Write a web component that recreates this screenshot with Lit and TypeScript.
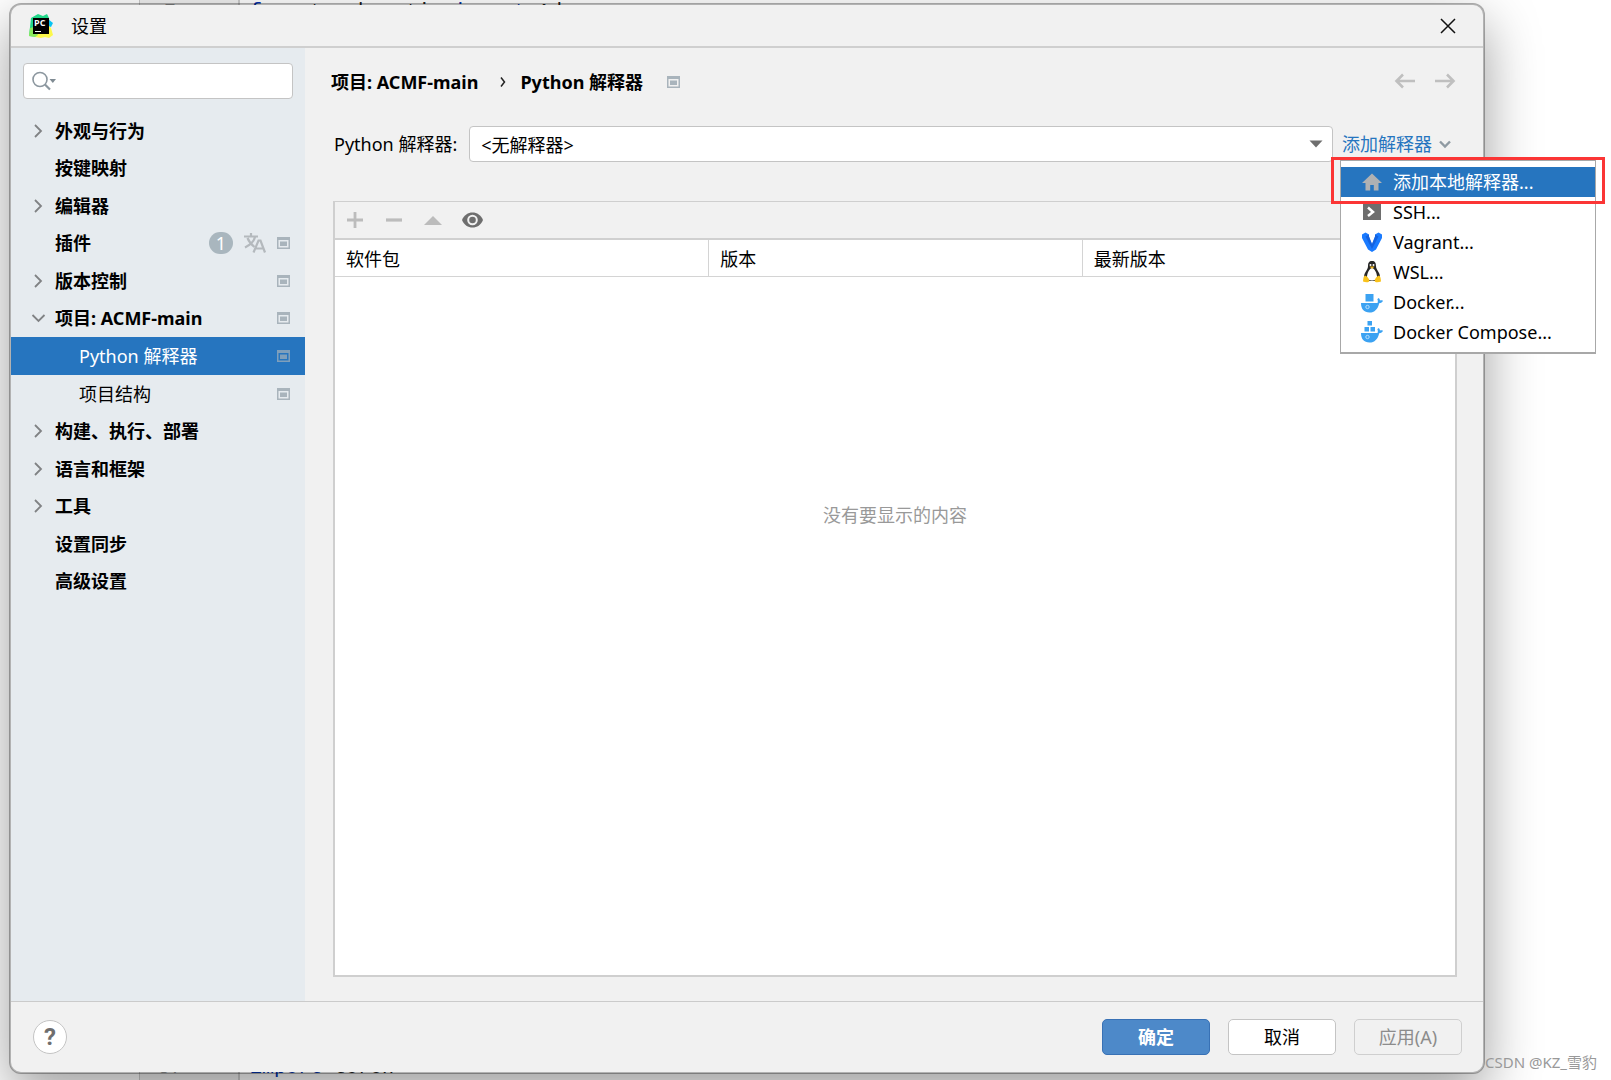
import { LitElement, html, css, svg, nothing } from "lit";
import { customElement, property, state } from "lit/decorators.js";
import { classMap } from "lit/directives/class-map.js";

type Row = { label: string; arrow?: "right" | "down"; child?: boolean; scope?: boolean; plugin?: boolean };

const ROWS: Row[] = [
  { label: "外观与行为", arrow: "right" },
  { label: "按键映射" },
  { label: "编辑器", arrow: "right" },
  { label: "插件", plugin: true, scope: true },
  { label: "版本控制", arrow: "right", scope: true },
  { label: "项目: ACMF-main", arrow: "down", scope: true },
  { label: "Python 解释器", child: true, scope: true },
  { label: "项目结构", child: true, scope: true },
  { label: "构建、执行、部署", arrow: "right" },
  { label: "语言和框架", arrow: "right" },
  { label: "工具", arrow: "right" },
  { label: "设置同步" },
  { label: "高级设置" },
];

const MENU = [
  { icon: "home", label: "添加本地解释器..." },
  { icon: "ssh", label: "SSH..." },
  { icon: "vagrant", label: "Vagrant..." },
  { icon: "linux", label: "WSL..." },
  { icon: "docker", label: "Docker..." },
  { icon: "compose", label: "Docker Compose..." },
];

const whale = svg`
  <path fill="#3ba2f2" d="M0 11h16.500c.6-1.200.4-2.800-.2-3.800l1.200-1.200c1 .7 1.400 1.500 1.500 2.400 1-.2 2-.1 3 .4-.6 1.500-1.900 2.300-3.800 2.400C17 17 13.500 20.500 8.500 20.500 3 20.500 0 17 0 11z"/>
  <circle cx="6.500" cy="15" r="1.700" fill="none" stroke="#b4dcfb" stroke-width="1"/>`;

const ICONS: Record<string, { w: number; h: number; body: unknown }> = {
  app: { w: 24, h: 24, body: svg`
    <path fill="#21d789" d="M2 4 9 0l5 2 4-2 2 4 1 16-13 3-8-1z"/>
    <path fill="#07c3f2" d="M19 5l5 4-2 4-3-1z"/>
    <path fill="#fcf84a" d="M20 12l2 2 2 7-4 3-4-1-4 1-6-1 2-4h11z"/>
    <path fill="#8bea5c" d="M1 14l4-1 4 8-3 2-6-1z"/>
    <path fill="#000" d="M4 4h16v16H4z"/>
    <path fill="#fff" d="M6 17h6v1H6z"/>
    <text x="5" y="12" font-size="9" font-weight="700" fill="#fff" font-family="Open Sans, sans-serif">PC</text>` },
  close: { w: 16, h: 16, body: svg`<path d="M1 1l14 14M15 1L1 15" stroke="#111" stroke-width="1.500" fill="none"/>` },
  search: { w: 24, h: 20, body: svg`
    <circle cx="8" cy="8.500" r="7" fill="none" stroke="#8c979f" stroke-width="1.600"/>
    <path d="M13 13.500l5 5" stroke="#8c979f" stroke-width="2.200"/><path fill="#7f8b93" d="M17.500 8H24l-3.200 4z"/>` },
  right: { w: 14, h: 14, body: svg`<path d="M4 1l6 6-6 6" stroke="#808284" stroke-width="1.800" fill="none"/>` },
  down: { w: 14, h: 14, body: svg`<path d="M1.500 4l6 6 6-6" stroke="#808284" stroke-width="1.800" fill="none"/>` },
  scope: { w: 13, h: 12, body: svg`
    <path class="scope-frame" fill-rule="evenodd" d="M0 0h13v12H0zM1.500 3v7.500h10V3z"/>
    <path class="scope-inner" d="M3 4.500h7V9H3z"/>` },
  translate: { w: 22, h: 20, body: svg`
    <g fill="none" stroke="#b4b9bd" stroke-width="2.200">
      <path d="M0 3.500h14M7 0v3.500M11 4c-1 4-5 8-10 10.500M3.500 5c1.500 4 4 6.500 7 9"/>
      <path d="M9.500 19.500L14.500 7.500h2L21 19.500M11.500 15.500H19"/>
    </g>` },
  back: { w: 20, h: 16, body: svg`<path d="M20 8H2M8 1.500L1.500 8 8 14.500" stroke="#bfbfbf" stroke-width="2.600" fill="none"/>` },
  forward: { w: 20, h: 16, body: svg`<path d="M0 8h18M12 1.500L18.500 8 12 14.500" stroke="#bfbfbf" stroke-width="2.600" fill="none"/>` },
  crumb: { w: 6, h: 10, body: svg`<path d="M1 .5L4.500 5 1 9.500" stroke="#222" stroke-width="1.500" fill="none"/>` },
  plus: { w: 16, h: 16, body: svg`<path d="M8 0v16M0 8h16" stroke="#bcbcbc" stroke-width="2.800"/>` },
  minus: { w: 16, h: 16, body: svg`<path d="M0 8h16" stroke="#bcbcbc" stroke-width="3.200"/>` },
  up: { w: 18, h: 16, body: svg`<path fill="#bcbcbc" d="M0 13L9 4l9 9z"/>` },
  eye: { w: 21, h: 16, body: svg`
    <path fill="#6e6e6e" d="M0 8C2 3 6 .5 10.500.5S19 3 21 8c-2 5-6 7.500-10.500 7.500S2 13 0 8z"/>
    <circle cx="10.500" cy="8" r="4.300" fill="none" stroke="#f1f1f1" stroke-width="2"/>` },
  caret: { w: 14, h: 8, body: svg`<path fill="#6e6e6e" d="M.5.500h13L7 7.500z"/>` },
  chevron: { w: 12, h: 8, body: svg`<path d="M1 1.500l5 5 5-5" stroke="#8f9aa2" stroke-width="2.400" fill="none"/>` },
  home: { w: 22, h: 20, body: svg`<path fill="#afb1b3" d="M11 1.500L1 11h3.500v7.500h4.700V13h3.600v5.500h4.700V11H21z"/>` },
  ssh: { w: 22, h: 20, body: svg`<path fill="#6e6e6e" d="M2 2h18v16H2z"/><path d="M7 5.500l5 4.500-5 4" fill="none" stroke="#fff" stroke-width="2.500"/>` },
  vagrant: { w: 22, h: 20, body: svg`
    <path fill="#1a7bff" d="M1 2.500L4.500.5 8 2.500v2l3 7.500L14 4.500v-2l3.500-2 3.500 2V6l-6 11.500-4 2.500-4-2.500L1 6z"/>
    <path fill="#1259d6" d="M14 4.500v-2l3.500 2L11 17v-5zM4.500 4.500L8 2.500v2l3 7.500v5z" opacity=".75"/>` },
  linux: { w: 22, h: 22, body: svg`
    <path fill="#262626" d="M11 0c3 0 4 2 4 5 0 4 4 6 4 11l-3 4H6l-3-4c0-5 4-7 4-11 0-3 1-5 4-5z"/>
    <path fill="#fff" d="M11 7c2.500 0 5 5.500 5 9 0 2.500-2.500 3.500-5 3.500S6 18.500 6 16c0-3.500 2.500-9 5-9z"/>
    <circle cx="9.500" cy="4" r="1" fill="#fff"/><circle cx="12.500" cy="4" r="1" fill="#fff"/>
    <path fill="#f3b81f" d="M8.500 5.500h5L11 8z"/>
    <path fill="#f9c21c" d="M4 14.500c2 .5 4 3 4.500 5C8 22 4.500 21.500 2 20.500c.3-3 .3-5 2-6zM18 14.500c-2 .5-4 3-4.500 5 .5 2.500 4 2 6.500 1-.3-3-.3-5-2-6z"/>` },
  docker: { w: 22, h: 20, body: svg`<path fill="#3ba2f2" d="M4.500 2h8v7.500h-8z"/>${whale}` },
  compose: { w: 22, h: 20, body: svg`<path fill="#3ba2f2" d="M6.500-1H11v4.500H6.500zM3.500 5h4.500v4.500H3.500zM9.500 5H14v4.500H9.500z"/>${whale}` },
};

const icon = (name: string) => {
  const i = ICONS[name];
  return html`<svg class="icon" width=${i.w} height=${i.h} viewBox="0 0 ${i.w} ${i.h}" aria-hidden="true">${i.body}</svg>`;
};

const base = css`
  * { box-sizing: border-box; }
  button, input, select {
    font: inherit;
    color: inherit;
    margin: 0;
    padding: 0;
    border: 0;
    background: none;
    outline: 0;
    text-align: left;
  }
  .icon { display: block; flex: none; overflow: visible; }
  .scope-frame, .scope-inner { fill: #a9b4bc; }
`;

@customElement("settings-tree")
export class SettingsTree extends LitElement {
  @property() selected = "";

  static styles = [base, css`
    :host { display: block; width: 294px; flex: none; background: #e6ebef; padding: 15px 0 0; }
    .search {
      display: flex; align-items: center; gap: 6px; height: 36px; margin: 0 12px 13px;
      padding: 0 8px; background: #fff; border: 1px solid #c4c4c4; border-radius: 4px;
    }
    .search input { flex: 1; min-width: 0; }
    .rows { display: grid; grid-auto-rows: 1fr; height: 488px; margin: 0; padding: 0; list-style: none; }
    .row {
      display: flex; align-items: center; width: 100%; height: 100%;
      padding: 0 15px 0 20px; font-weight: 700; white-space: nowrap;
    }
    .arrow { width: 24px; flex: none; }
    .label { flex: 1; }
    .child { padding-left: 68px; font-weight: 400; }
    .child .arrow { display: none; }
    .selected { background: #2675bf; color: #fff; }
    .selected .scope-frame, .selected .scope-inner { fill: #7f9fbb; }
    .badge {
      width: 24px; height: 22px; border-radius: 11px; background: #a9b6be; color: #fff;
      font-weight: 400; line-height: 22px; text-align: center;
    }
    .extras { display: flex; align-items: center; gap: 11px; }
  `];

  render() {
    return html`
      <label class="search">${icon("search")}<input type="text" aria-label="搜索" /></label>
      <ul class="rows">
        ${ROWS.map((r) => html`<li>
          <button class=${classMap({ row: true, child: !!r.child, selected: r.label === this.selected })}
            @click=${() => (this.selected = r.label)}>
            <span class="arrow">${r.arrow ? icon(r.arrow) : nothing}</span>
            <span class="label">${r.label}</span>
            <span class="extras">
              ${r.plugin ? html`<span class="badge">1</span>${icon("translate")}` : nothing}
              ${r.scope ? icon("scope") : nothing}
            </span>
          </button></li>`)}
      </ul>`;
  }
}

@customElement("interpreter-menu")
export class InterpreterMenu extends LitElement {
  static styles = [base, css`
    :host { position: absolute; top: 34px; left: -2px; width: 256px; z-index: 2; }
    .menu {
      margin: 0; padding: 6px 0 5px; list-style: none; background: #fff;
      border: 1px solid #a8a8a8; border-bottom-width: 2px;
    }
    .item {
      display: flex; align-items: center; gap: 10px; width: 100%; height: 30px;
      padding: 0 20px; color: #000; white-space: nowrap;
    }
    .active { background: #2675bf; color: #fff; }
    .mark {
      position: absolute; top: -3px; left: -9px; right: -9px; height: 47px;
      border: 3px solid #fb3535; pointer-events: none;
    }
  `];

  render() {
    return html`
      <ul class="menu">
        ${MENU.map((m, i) => html`<li><button class=${classMap({ item: true, active: i === 0 })}>
          ${icon(m.icon)}<span>${m.label}</span></button></li>`)}
      </ul>
      <div class="mark"></div>`;
  }
}

@customElement("interpreter-page")
export class InterpreterPage extends LitElement {
  @state() private open = true;

  static styles = [base, css`
    :host { display: flex; flex-direction: column; flex: 1; min-width: 0; padding: 0 26px 24px 28px; }
    .crumbs { display: flex; align-items: center; height: 68px; margin-left: -2px; font-weight: 700; white-space: nowrap; }
    .crumbs .sep { margin: 0 14px 0 22px; }
    .crumbs .scope { margin-left: 24px; }
    .nav { display: flex; gap: 20px; margin-left: auto; padding: 0 2px 2px 0; }
    .field { display: flex; align-items: center; height: 36px; margin: 10px 0 39px; white-space: nowrap; }
    .field label { margin: 0 12px 0 1px; }
    .combo { position: relative; flex: 1; display: flex; align-items: center; min-width: 0; }
    .combo select {
      appearance: none; width: 100%; height: 36px; padding: 2px 30px 0 11px;
      background: #fff; border: 1px solid #c4c4c4; border-radius: 4px;
    }
    .combo .caret { position: absolute; right: 10px; pointer-events: none; }
    .adder { position: relative; margin: 0 6px 0 9px; }
    .link { display: flex; align-items: center; gap: 7px; height: 36px; color: #2675bf; }
    .panel { flex: 1; display: flex; flex-direction: column; border: 2px solid #cfcfcf; border-top-width: 1px; background: #fff; }
    .tools { display: flex; align-items: center; gap: 21px; height: 38px; padding: 0 11px; background: #f1f1f1; border-bottom: 2px solid #d0d0d0; }
    .tools button { display: flex; justify-content: center; width: 18px; }
    table { width: 100%; table-layout: fixed; border-collapse: separate; border-spacing: 0; }
    th { height: 37px; padding: 2px 11px 0; font-weight: 400; text-align: left; border-bottom: 1px solid #d4d4d4; }
    th + th { border-left: 1px solid #d4d4d4; }
    .empty { padding-top: 226px; text-align: center; color: #999; }
  `];

  render() {
    return html`
      <div class="crumbs">
        <span>项目: ACMF-main</span><span class="sep">${icon("crumb")}</span><span>Python 解释器</span>
        <span class="scope">${icon("scope")}</span>
        <span class="nav">
          <button aria-label="后退">${icon("back")}</button>
          <button aria-label="前进">${icon("forward")}</button>
        </span>
      </div>
      <div class="field">
        <label for="interp">Python 解释器:</label>
        <span class="combo">
          <select id="interp"><option>&lt;无解释器&gt;</option></select>
          <span class="caret">${icon("caret")}</span>
        </span>
        <div class="adder">
          <button class="link" aria-expanded=${this.open} @click=${() => (this.open = !this.open)}>
            添加解释器 ${icon("chevron")}
          </button>
          ${this.open ? html`<interpreter-menu></interpreter-menu>` : nothing}
        </div>
      </div>
      <section class="panel">
        <div class="tools">
          <button aria-label="添加">${icon("plus")}</button>
          <button aria-label="移除">${icon("minus")}</button>
          <button aria-label="升级">${icon("up")}</button>
          <button aria-label="显示">${icon("eye")}</button>
        </div>
        <table><thead><tr><th>软件包</th><th>版本</th><th>最新版本</th></tr></thead></table>
        <div class="empty">没有要显示的内容</div>
      </section>`;
  }
}

@customElement("app-root")
export class AppRoot extends LitElement {
  static styles = [base, css`
    :host {
      display: block; position: relative; height: 100vh; overflow: hidden; background: #fff; color: #000;
      font: 18px/24px "Noto Sans", "Noto Sans CJK SC", sans-serif;
    }
    .editor {
      position: absolute; inset: 0; display: grid; grid-template-columns: 139px 101px 1fr;
      font: 20px/24px "Liberation Mono", monospace; color: #222;
    }
    .gutter { background: #f0f0f0; border: 1px solid #ccc; border-width: 0 2px 0 1px; }
    .gutter, .code { display: flex; flex-direction: column; justify-content: space-between; overflow: hidden; }
    .gutter { align-items: center; color: #999; padding-right: 38px; }
    .code { padding-left: 10px; white-space: pre; }
    .kw { color: #0033b3; }
    .stage { position: relative; display: flex; height: 100%; padding: 3px 126px 6px 9px; }
    .dialog {
      flex: 1; min-width: 0; display: flex; flex-direction: column;
      border: 2px solid rgba(0, 0, 0, 0.3); border-radius: 12px;
      background: #f1f1f1; background-clip: padding-box;
      box-shadow: 0 20px 54px rgba(0, 0, 0, 0.38);
    }
    .title { display: flex; align-items: center; gap: 18px; height: 43px; flex: none; padding: 0 27px 0 18px; border-bottom: 2px solid #cfcfcf; }
    .title h1 { flex: 1; margin: 0; font-size: 18px; font-weight: 400; }
    .body { flex: 1; display: flex; min-height: 0; }
    .foot { display: flex; align-items: center; gap: 18px; height: 71px; flex: none; padding: 0 21px 0 22px; border-top: 1px solid #cbcbcb; }
    .foot button { width: 108px; height: 36px; border: 1px solid #c4c4c4; border-radius: 5px; background: #fff; text-align: center; }
    .foot .help { width: 34px; height: 34px; margin-right: auto; border-radius: 17px; color: #6e6e6e; font: 700 24px/32px Roboto, sans-serif; }
    .foot .ok { background: #4d89c9; border-color: #3871b5; color: #fff; font-weight: 700; }
    .foot .off { background: none; color: #8c8c8c; border-color: #cfcfcf; }
    .credit {
      position: absolute; right: 14px; bottom: 8px; font-size: 15px; line-height: 20px;
      color: #999; white-space: nowrap;
    }
  `];

  render() {
    return html`
      <div class="editor" aria-hidden="true">
        <div></div>
        <div class="gutter"><span>7</span><span>57</span></div>
        <div class="code">
          <div><span class="kw">from</span> torch.optim <span class="kw">import</span> Adam</div>
          <div><span class="kw">import</span> torch</div>
        </div>
      </div>
      <div class="stage">
        <main class="dialog">
          <header class="title">${icon("app")}<h1>设置</h1><button aria-label="关闭">${icon("close")}</button></header>
          <div class="body">
            <settings-tree selected="Python 解释器"></settings-tree>
            <interpreter-page></interpreter-page>
          </div>
          <footer class="foot">
            <button class="help" aria-label="帮助">?</button>
            <button class="ok">确定</button>
            <button>取消</button>
            <button class="off" disabled>应用(A)</button>
          </footer>
        </main>
      </div>
      <div class="credit">CSDN @KZ_雪豹</div>`;
  }
}
